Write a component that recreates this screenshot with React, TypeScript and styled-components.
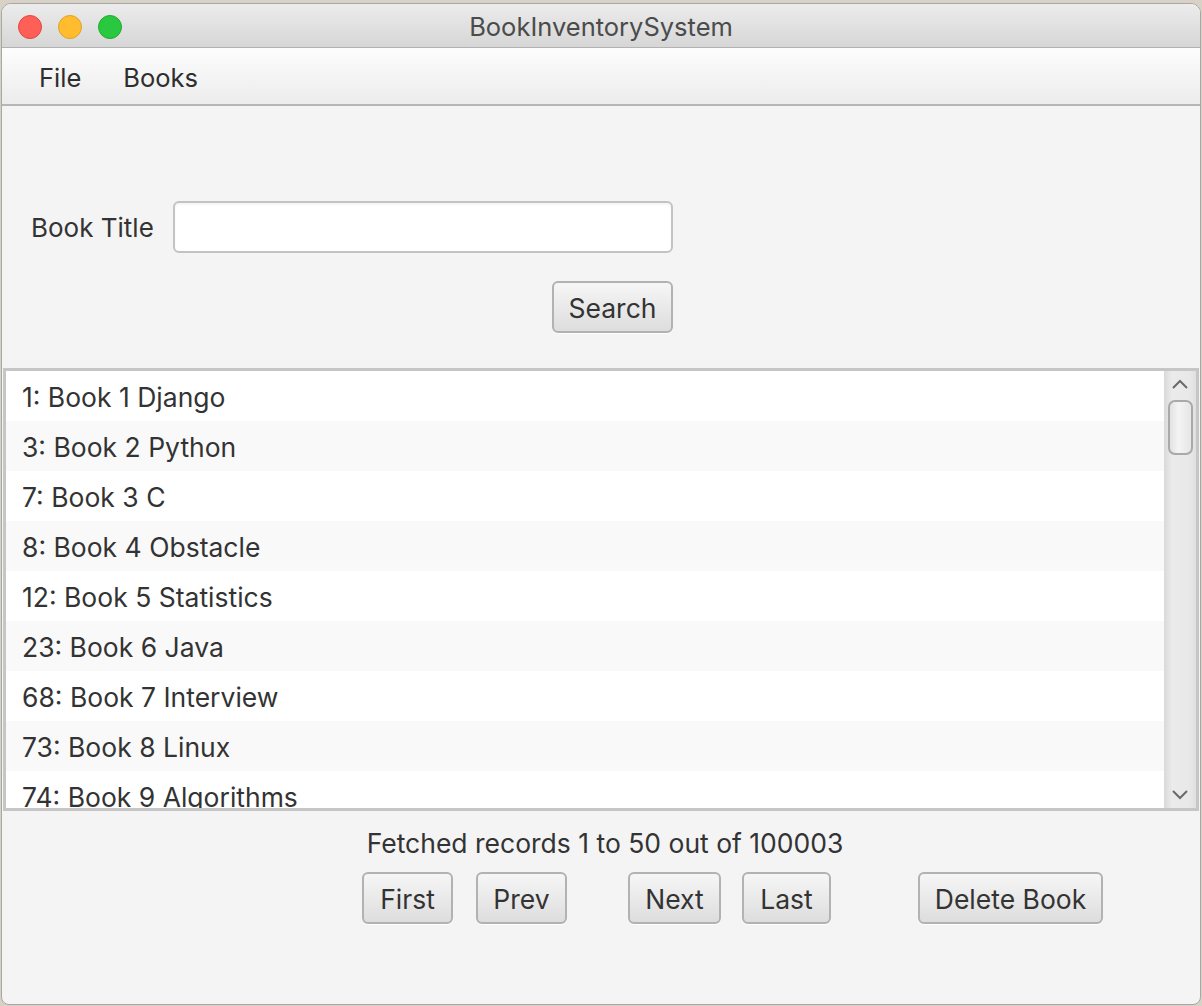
import React from "react";
import styled, { createGlobalStyle } from "styled-components";

const GlobalStyle = createGlobalStyle`
  html, body { margin: 0; padding: 0; }
  body {
    background: #d8d1c6;
    font-family: Inter, "Liberation Sans", "Noto Sans", sans-serif;
    color: #333333;
  }
  * { box-sizing: border-box; }
`;

const Window = styled.div`
  width: 1200px;
  height: 1002px;
  margin: 3px 0 0 1px;
  border: 1px solid #a7a7a7;
  border-radius: 10px 10px 8px 8px;
  overflow: hidden;
  display: flex;
  flex-direction: column;
  background: #f4f4f4;
`;

const TitleBar = styled.div`
  height: 44px;
  flex: none;
  display: grid;
  grid-template-columns: 1fr auto 1fr;
  align-items: center;
  padding-top: 2px;
  background: linear-gradient(#ececec, #d6d6d6);
  border-bottom: 1px solid #b2b2b2;
`;

const Lights = styled.div`
  display: flex;
  gap: 16px;
  padding-left: 16px;
`;

const Light = styled.span<{ $fill: string; $edge: string }>`
  width: 24px;
  height: 24px;
  border-radius: 50%;
  background: ${(p) => p.$fill};
  border: 1px solid ${(p) => p.$edge};
`;

const Title = styled.div`
  font-size: 25.5px;
  color: #4b4b4b;
`;

const MenuBar = styled.div`
  height: 58px;
  flex: none;
  display: flex;
  align-items: center;
  padding: 2px 0 0 16px;
  background: linear-gradient(#fdfdfd, #ececec);
  border-bottom: 2px solid #b6b6b6;
`;

const MenuItem = styled.div`
  font-size: 25.5px;
  padding: 0 21px;
  color: #2e2e2e;
`;

const Content = styled.div`
  flex: 1;
  display: flex;
  flex-direction: column;
`;

const Form = styled.div`
  display: grid;
  grid-template-columns: 121px 500px;
  column-gap: 21px;
  row-gap: 28px;
  align-items: center;
  margin: 95px 0 0 29px;
`;

const Label = styled.label`
  font-size: 26px;
  white-space: nowrap;
`;

const TextInput = styled.input`
  width: 500px;
  height: 52px;
  border: 2px solid #c3c3c3;
  border-radius: 6px;
  background: #ffffff;
  box-shadow: inset 0 2px 2px rgba(0, 0, 0, 0.04);
  font-size: 26.5px;
  font-family: inherit;
  padding: 0 12px;
  outline: none;
`;

const Button = styled.button<{ $w: number; $ml?: number }>`
  width: ${(p) => p.$w}px;
  height: 52px;
  margin-left: ${(p) => p.$ml ?? 0}px;
  padding: 2px 0 0;
  border: 2px solid #b2b2b2;
  border-radius: 6px;
  background: linear-gradient(#f6f6f6, #dddddd);
  box-shadow: 0 1px 0 rgba(255, 255, 255, 0.9);
  font-family: inherit;
  font-size: 26.5px;
  color: #333333;
  flex: none;
`;

const SearchButton = styled(Button)`
  grid-column: 2;
  justify-self: end;
`;

const ListBox = styled.div`
  margin: 35px 1px 0 1px;
  height: 443px;
  border: 3px solid #c6c6c6;
  display: flex;
  background: #ffffff;
`;

const Rows = styled.div`
  flex: 1;
  overflow: hidden;
`;

const Row = styled.div<{ $alt: boolean }>`
  height: 50px;
  display: flex;
  align-items: center;
  padding: 2px 0 0 16px;
  font-size: 26.5px;
  background: ${(p) => (p.$alt ? "#f9f9f9" : "#ffffff")};
  white-space: nowrap;
`;

const ScrollBar = styled.div`
  width: 32px;
  flex: none;
  display: flex;
  flex-direction: column;
  align-items: center;
  background: linear-gradient(to right, #d9d9d9, #ebebeb 25%, #e8e8e8 80%, #e0e0e0);
`;

const Arrow = styled.div`
  height: 26px;
  display: flex;
  align-items: center;
  justify-content: center;
`;

const Thumb = styled.div`
  width: 25px;
  height: 55px;
  margin-top: 3px;
  border: 2px solid #a9a9a9;
  border-radius: 7px;
  background: linear-gradient(to right, #e2e2e2, #f4f4f4 40%, #e6e6e6);
`;

const Spacer = styled.div`
  flex: 1;
`;

const Status = styled.div`
  margin-top: 17px;
  height: 30px;
  line-height: 30px;
  text-align: center;
  font-size: 26.5px;
  padding-left: 8px;
`;

const Pager = styled.div`
  display: flex;
  margin: 14px 0 0 360px;
`;

const books = [
  "1: Book 1 Django",
  "3: Book 2 Python",
  "7: Book 3 C",
  "8: Book 4 Obstacle",
  "12: Book 5 Statistics",
  "23: Book 6 Java",
  "68: Book 7 Interview",
  "73: Book 8 Linux",
  "74: Book 9 Algorithms",
];

const Chevron = ({ up }: { up: boolean }) => (
  <svg width="18" height="10" viewBox="0 0 18 10">
    <polyline
      points={up ? "2,9 9,2 16,9" : "2,1 9,8 16,1"}
      fill="none"
      stroke="#6a6a6a"
      strokeWidth="2"
    />
  </svg>
);

export default function App() {
  return (
    <>
      <GlobalStyle />
      <Window>
        <TitleBar>
          <Lights>
            <Light $fill="#fe5f57" $edge="#e2463f" />
            <Light $fill="#febc2e" $edge="#e0a228" />
            <Light $fill="#2ac840" $edge="#1dad2b" />
          </Lights>
          <Title>BookInventorySystem</Title>
          <div />
        </TitleBar>
        <MenuBar>
          <MenuItem>File</MenuItem>
          <MenuItem>Books</MenuItem>
        </MenuBar>
        <Content>
          <Form>
            <Label>Book Title</Label>
            <TextInput />
            <SearchButton $w={121}>Search</SearchButton>
          </Form>
          <ListBox>
            <Rows>
              {books.map((b, i) => (
                <Row key={b} $alt={i % 2 === 1}>
                  {b}
                </Row>
              ))}
            </Rows>
            <ScrollBar>
              <Arrow>
                <Chevron up />
              </Arrow>
              <Thumb />
              <Spacer />
              <Arrow>
                <Chevron up={false} />
              </Arrow>
            </ScrollBar>
          </ListBox>
          <Status>Fetched records 1 to 50 out of 100003</Status>
          <Pager>
            <Button $w={91}>First</Button>
            <Button $w={91} $ml={23}>Prev</Button>
            <Button $w={93} $ml={61}>Next</Button>
            <Button $w={89} $ml={21}>Last</Button>
            <Button $w={185} $ml={87}>Delete Book</Button>
          </Pager>
        </Content>
      </Window>
    </>
  );
}
